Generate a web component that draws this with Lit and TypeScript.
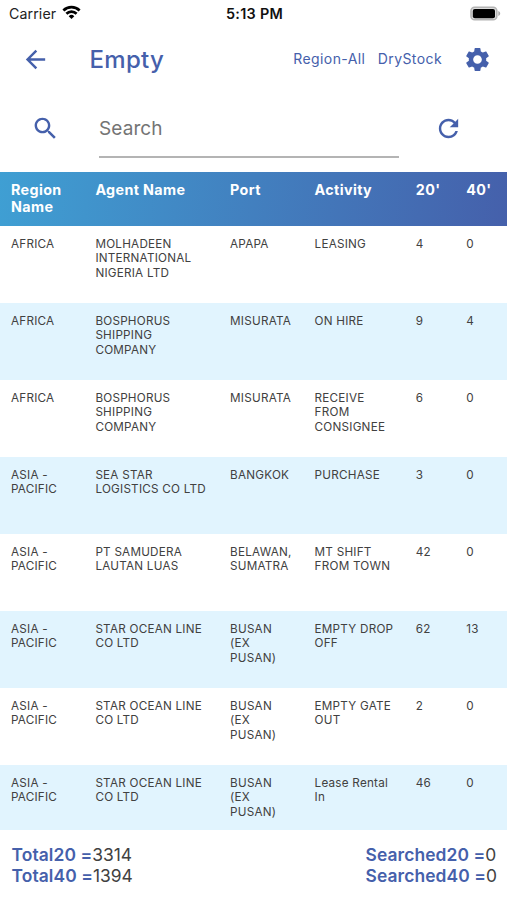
import { LitElement, html, css, svg } from "lit";
import { customElement } from "lit/decorators.js";

type Row = [string, string, string, string, string, string];

const rows: Row[] = [
  ["AFRICA", "MOLHADEEN\nINTERNATIONAL\nNIGERIA LTD", "APAPA", "LEASING", "4", "0"],
  ["AFRICA", "BOSPHORUS\nSHIPPING\nCOMPANY", "MISURATA", "ON HIRE", "9", "4"],
  ["AFRICA", "BOSPHORUS\nSHIPPING\nCOMPANY", "MISURATA", "RECEIVE\nFROM\nCONSIGNEE", "6", "0"],
  ["ASIA -\nPACIFIC", "SEA STAR\nLOGISTICS CO LTD", "BANGKOK", "PURCHASE", "3", "0"],
  ["ASIA -\nPACIFIC", "PT SAMUDERA\nLAUTAN LUAS", "BELAWAN,\nSUMATRA", "MT SHIFT\nFROM TOWN", "42", "0"],
  ["ASIA -\nPACIFIC", "STAR OCEAN LINE\nCO LTD", "BUSAN\n(EX\nPUSAN)", "EMPTY DROP\nOFF", "62", "13"],
  ["ASIA -\nPACIFIC", "STAR OCEAN LINE\nCO LTD", "BUSAN\n(EX\nPUSAN)", "EMPTY GATE\nOUT", "2", "0"],
  ["ASIA -\nPACIFIC", "STAR OCEAN LINE\nCO LTD", "BUSAN\n(EX\nPUSAN)", "Lease Rental\nIn", "46", "0"],
];
const heads: Row = ["Region\nName", "Agent Name", "Port", "Activity", "20'", "40'"];

const icon = (cls: string, d: string) =>
  html`<svg class="icon ${cls}" viewBox="0 0 24 24">${svg`<path d=${d}></path>`}</svg>`;

const BACK = "M20 11H7.83l5.59-5.59L12 4l-8 8 8 8 1.41-1.41L7.83 13H20v-2z";
const GEAR =
  "M19.14 12.94c.04-.3.06-.61.06-.94 0-.32-.02-.64-.07-.94l2.03-1.58c.18-.14.23-.41.12-.61l-1.92-3.32c-.12-.22-.37-.29-.59-.22l-2.39.96c-.5-.38-1.03-.7-1.62-.94l-.36-2.54c-.04-.24-.24-.41-.48-.41h-3.84c-.24 0-.43.17-.47.41l-.36 2.54c-.59.24-1.13.57-1.62.94l-2.39-.96c-.22-.08-.47 0-.59.22L2.74 8.87c-.12.21-.08.47.12.61l2.03 1.58c-.05.3-.09.63-.09.94s.02.64.07.94l-2.03 1.58c-.18.14-.23.41-.12.61l1.92 3.32c.12.22.37.29.59.22l2.39-.96c.5.38 1.03.7 1.62.94l.36 2.54c.05.24.24.41.48.41h3.84c.24 0 .44-.17.47-.41l.36-2.54c.59-.24 1.13-.56 1.62-.94l2.39.96c.22.08.47 0 .59-.22l1.92-3.32c.12-.22.07-.47-.12-.61l-2.01-1.58zM12 15.6c-1.98 0-3.6-1.62-3.6-3.6s1.62-3.6 3.6-3.6 3.6 1.62 3.6 3.6-1.62 3.6-3.6 3.6z";
const SEARCH =
  "M15.5 14h-.79l-.28-.27C15.41 12.59 16 11.11 16 9.5 16 5.91 13.09 3 9.5 3S3 5.91 3 9.5 5.91 16 9.5 16c1.61 0 3.09-.59 4.23-1.57l.27.28v.79l5 4.99L20.49 19l-4.99-5zm-6 0C7.01 14 5 11.99 5 9.5S7.01 5 9.5 5 14 7.01 14 9.5 11.99 14 9.5 14z";
const REFRESH =
  "M17.65 6.35C16.2 4.9 14.21 4 12 4c-4.42 0-7.99 3.58-7.99 8s3.57 8 7.99 8c3.73 0 6.84-2.55 7.73-6h-2.08c-.82 2.33-3.04 4-5.65 4-3.31 0-6-2.69-6-6s2.69-6 6-6c1.66 0 3.14.69 4.22 1.78L13 11h7V4l-2.35 2.35z";

@customElement("app-root")
export class AppRoot extends LitElement {
  static styles = css`
    :host {
      display: flex;
      flex-direction: column;
      height: 900px;
      overflow: hidden;
      background: #fff;
      font-family: Inter, "Liberation Sans", sans-serif;
      color: #414141;
    }
    * { box-sizing: border-box; }
    .status {
      display: grid;
      grid-template-columns: 1fr auto 1fr;
      align-items: center;
      height: 27px;
      padding: 0 6px 0 9px;
      font-size: 14.2px;
      color: #222;
    }
    .carrier { display: flex; align-items: center; gap: 5.5px; letter-spacing: 0.1px; }
    .wifi { width: 19px; height: 15px; margin-top: -2px; }
    .time { font-weight: 600; color: #111; font-size: 14.4px; letter-spacing: 0.3px; margin-right: 1px; }
    .battery { justify-self: end; width: 32px; height: 15px; margin-top: -1px; }
    .bar {
      display: flex;
      align-items: center;
      height: 64px;
      padding: 1px 15px 0 20.5px;
      color: #4560ab;
    }
    .icon { display: block; flex: none; width: 29px; height: 29px; fill: #4560ab; }
    h1 {
      margin: 1px auto 0 40px;
      font-size: 24px;
      line-height: 30px;
      font-weight: 500;
      letter-spacing: 0.3px;
    }
    .link { font-size: 14px; letter-spacing: 0.4px; margin-right: 12.5px; padding-bottom: 2px; }
    .link.last { margin-right: 21px; }
    .search { display: flex; height: 81px; padding: 22.5px 44px 0 30.5px; }
    .field {
      width: 300.5px;
      height: 44.5px;
      margin: 0 35px 0 39px;
      border-bottom: 2px solid #b4b4b4;
      padding: 2.5px 0 0 0.5px;
      font-size: 19px;
      line-height: 26px;
      letter-spacing: 0.1px;
      color: #747474;
    }
    .row {
      display: grid;
      grid-template-columns: 84.4px 134.7px 84.5px 101.2px 50.5px 1fr;
      flex: none;
      height: 77px;
      padding: 11px 0 0 11px;
      font-size: 11.7px;
      line-height: 14.7px;
      letter-spacing: 0.23px;
      white-space: pre;
    }
    .row.tint { background: #e1f4fe; }
    .row.head {
      height: 53.5px;
      padding-top: 9px;
      background: linear-gradient(96deg, #3f9fd3, #4560ab);
      color: #fff;
      font-size: 14.3px;
      line-height: 17.4px;
      font-weight: 700;
      letter-spacing: 0.38px;
    }
    .list { height: 604.5px; overflow: hidden; }
    .totals {
      display: flex;
      justify-content: space-between;
      padding: 14px 10px 0 11.5px;
      font-size: 17.4px;
      line-height: 21px;
    }
    .totals b { color: #4560ab; font-weight: 600; letter-spacing: 0.1px; }
  `;

  private cells(r: Row, cls: string) {
    return html`<div class="row ${cls}">${r.map((c) => html`<div>${c}</div>`)}</div>`;
  }

  render() {
    return html`
      <div class="status">
        <div class="carrier">
          <span>Carrier</span>
          <svg class="wifi" viewBox="0 0 19 15" fill="none" stroke="#000" stroke-width="2.7">
            <path d="M1.4 5.5A11.5 11.5 0 0 1 17.6 5.5"></path>
            <path d="M4.4 8.8A7.2 7.2 0 0 1 14.6 8.8"></path>
            <path d="M9.5 14L6.7 11.2A4 4 0 0 1 12.3 11.2Z" fill="#000" stroke="none"></path>
          </svg>
        </div>
        <div class="time">5:13 PM</div>
        <svg class="battery" viewBox="0 0 32 15">
          <rect x="2" y="1.2" width="25.8" height="12.6" rx="3.6" fill="#ddd" stroke="#b4b4b4" stroke-width="1.6"></rect>
          <rect x="3.8" y="2.9" width="22.2" height="9.3" rx="2" fill="#000"></rect>
          <path d="M29.3 5v5c1.2-.4 1.9-1.3 1.9-2.5S30.5 5.4 29.3 5z" fill="#aaa"></path>
        </svg>
      </div>
      <div class="bar">
        ${icon("back", BACK)}
        <h1>Empty</h1>
        <span class="link">Region-All</span>
        <span class="link last">DryStock</span>
        ${icon("gear", GEAR)}
      </div>
      <div class="search">
        ${icon("glass", SEARCH)}
        <div class="field">Search</div>
        ${icon("refresh", REFRESH)}
      </div>
      ${this.cells(heads, "head")}
      <div class="list">${rows.map((r, i) => this.cells(r, i % 2 ? "tint" : ""))}</div>
      <div class="totals">
        <div><div><b>Total20 =</b>3314</div><div><b>Total40 =</b>1394</div></div>
        <div><div><b>Searched20 =</b>0</div><div><b>Searched40 =</b>0</div></div>
      </div>
    `;
  }
}
